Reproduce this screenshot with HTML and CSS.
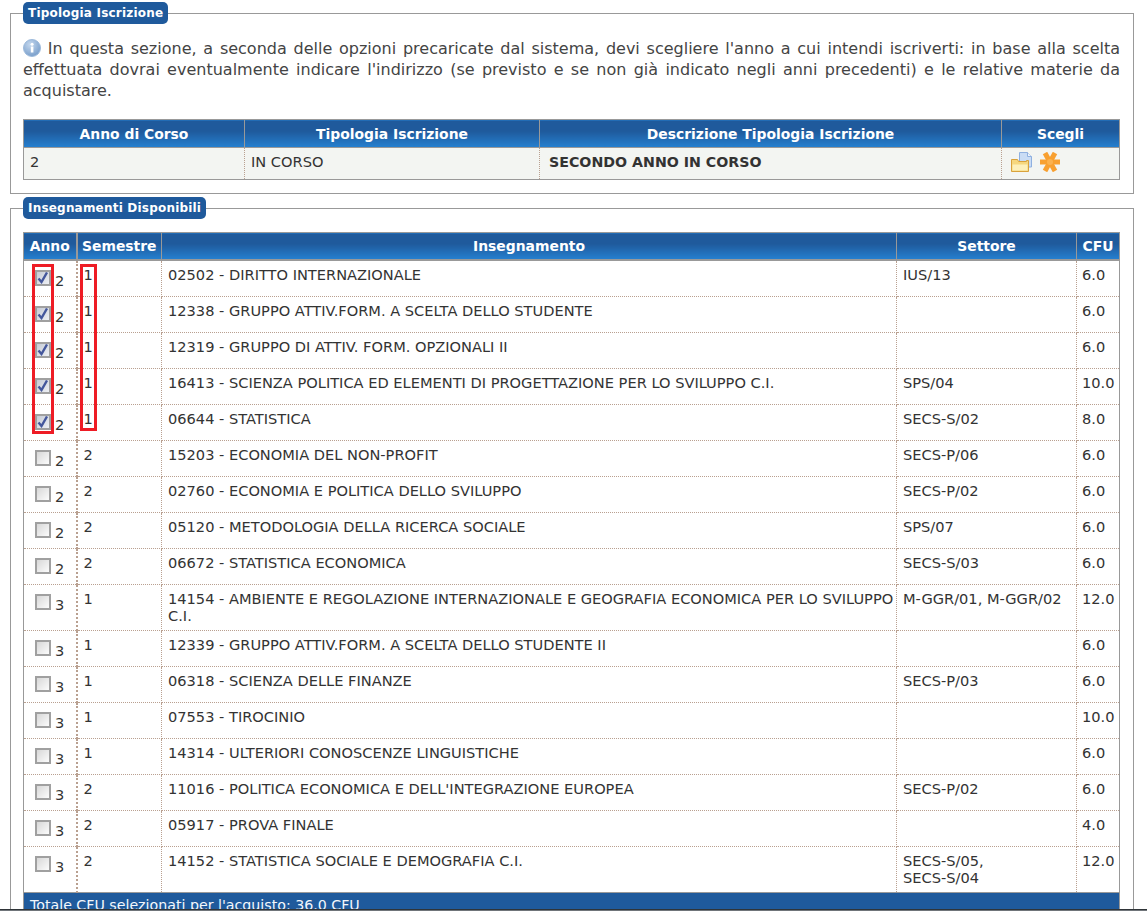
FILE: index.html
```html
<!DOCTYPE html>
<html lang="it">
<head>
  <meta charset="UTF-8" />
  <title>Scelta insegnamenti</title>
  <link rel="stylesheet" href="styles.css">
</head>
<body>
  <fieldset class="box box-top">
    <legend>Tipologia Iscrizione</legend>
    <p class="intro">
      <svg class="info" viewBox="0 0 18 18" width="18" height="18"><defs><radialGradient id="ig" cx="0.4" cy="0.3" r="0.8"><stop offset="0" stop-color="#c5d8ee"/><stop offset="1" stop-color="#6f97c6"/></radialGradient></defs><circle cx="9" cy="9" r="8.5" fill="url(#ig)" stroke="#9dbadb"/><rect x="7.800" y="7.500" width="2.600" height="6" fill="#fff"/><circle cx="9.100" cy="5.200" r="1.500" fill="#fff"/></svg>
      In questa sezione, a seconda delle opzioni precaricate dal sistema, devi scegliere l'anno a cui intendi iscriverti: in base alla scelta effettuata dovrai eventualmente indicare l'indirizzo (se previsto e se non già indicato negli anni precedenti) e le relative materie da acquistare.
    </p>
    <table class="grid grid-tipo">
      <colgroup><col class="c1"><col class="c2"><col class="c3"><col class="c4"></colgroup>
      <thead>
        <tr><th>Anno di Corso</th><th>Tipologia Iscrizione</th><th>Descrizione Tipologia Iscrizione</th><th>Scegli</th></tr>
      </thead>
      <tbody>
        <tr>
          <td>2</td>
          <td>IN CORSO</td>
          <td><strong>SECONDO ANNO IN CORSO</strong></td>
          <td class="actions">
            <svg viewBox="0 0 21 20" width="21" height="20"><path d="M8.500.5h8l4 4V15h-12z" fill="#c9dcf5" stroke="#8fb0e0"/><path d="M16.500.5v4h4" fill="#eef4fc" stroke="#8fb0e0"/><path d="M.5 19.500V7.500h6l1 2h8v-1h2v11z" fill="#f6d77e" stroke="#d9a23c"/><path d="M1.500 12.500h15v6h-15z" fill="#fdf0bb"/></svg>
            <svg viewBox="0 0 20 20" width="20" height="20"><g stroke="#f8a030" stroke-width="5" stroke-linecap="butt"><path d="M0 10h20"/><path d="M5 1l10 18"/><path d="M15 1L5 19"/></g><circle cx="10" cy="10" r="3" fill="#fbb14e"/></svg>
          </td>
        </tr>
      </tbody>
    </table>
  </fieldset>

  <fieldset class="box">
    <legend>Insegnamenti Disponibili</legend>
    <table class="grid grid-ins">
      <colgroup><col class="a"><col class="b"><col class="d"><col class="e"><col class="f"></colgroup>
      <thead>
        <tr><th>Anno</th><th>Semestre</th><th>Insegnamento</th><th>Settore</th><th>CFU</th></tr>
      </thead>
      <tbody>
        <tr><td class="anno"><span class="check on"><svg viewBox="0 0 12 12" width="12" height="12"><path d="M1.500 6.500l3 3.500 5.500-9.500" fill="none" stroke="#44579c" stroke-width="2.400"/></svg></span>2</td><td>1</td><td>02502 - DIRITTO INTERNAZIONALE</td><td>IUS/13</td><td>6.0</td></tr>
        <tr><td class="anno"><span class="check on"><svg viewBox="0 0 12 12" width="12" height="12"><path d="M1.500 6.500l3 3.500 5.500-9.500" fill="none" stroke="#44579c" stroke-width="2.400"/></svg></span>2</td><td>1</td><td>12338 - GRUPPO ATTIV.FORM. A SCELTA DELLO STUDENTE</td><td></td><td>6.0</td></tr>
        <tr><td class="anno"><span class="check on"><svg viewBox="0 0 12 12" width="12" height="12"><path d="M1.500 6.500l3 3.500 5.500-9.500" fill="none" stroke="#44579c" stroke-width="2.400"/></svg></span>2</td><td>1</td><td>12319 - GRUPPO DI ATTIV. FORM. OPZIONALI II</td><td></td><td>6.0</td></tr>
        <tr><td class="anno"><span class="check on"><svg viewBox="0 0 12 12" width="12" height="12"><path d="M1.500 6.500l3 3.500 5.500-9.500" fill="none" stroke="#44579c" stroke-width="2.400"/></svg></span>2</td><td>1</td><td>16413 - SCIENZA POLITICA ED ELEMENTI DI PROGETTAZIONE PER LO SVILUPPO C.I.</td><td>SPS/04</td><td>10.0</td></tr>
        <tr><td class="anno"><span class="check on"><svg viewBox="0 0 12 12" width="12" height="12"><path d="M1.500 6.500l3 3.500 5.500-9.500" fill="none" stroke="#44579c" stroke-width="2.400"/></svg></span>2</td><td>1</td><td>06644 - STATISTICA</td><td>SECS-S/02</td><td>8.0</td></tr>
        <tr><td class="anno"><span class="check"></span>2</td><td>2</td><td>15203 - ECONOMIA DEL NON-PROFIT</td><td>SECS-P/06</td><td>6.0</td></tr>
        <tr><td class="anno"><span class="check"></span>2</td><td>2</td><td>02760 - ECONOMIA E POLITICA DELLO SVILUPPO</td><td>SECS-P/02</td><td>6.0</td></tr>
        <tr><td class="anno"><span class="check"></span>2</td><td>2</td><td>05120 - METODOLOGIA DELLA RICERCA SOCIALE</td><td>SPS/07</td><td>6.0</td></tr>
        <tr><td class="anno"><span class="check"></span>2</td><td>2</td><td>06672 - STATISTICA ECONOMICA</td><td>SECS-S/03</td><td>6.0</td></tr>
        <tr><td class="anno"><span class="check"></span>3</td><td>1</td><td>14154 - AMBIENTE E REGOLAZIONE INTERNAZIONALE E GEOGRAFIA ECONOMICA PER LO SVILUPPO C.I.</td><td>M-GGR/01, M-GGR/02</td><td>12.0</td></tr>
        <tr><td class="anno"><span class="check"></span>3</td><td>1</td><td>12339 - GRUPPO ATTIV.FORM. A SCELTA DELLO STUDENTE II</td><td></td><td>6.0</td></tr>
        <tr><td class="anno"><span class="check"></span>3</td><td>1</td><td>06318 - SCIENZA DELLE FINANZE</td><td>SECS-P/03</td><td>6.0</td></tr>
        <tr><td class="anno"><span class="check"></span>3</td><td>1</td><td>07553 - TIROCINIO</td><td></td><td>10.0</td></tr>
        <tr><td class="anno"><span class="check"></span>3</td><td>1</td><td>14314 - ULTERIORI CONOSCENZE LINGUISTICHE</td><td></td><td>6.0</td></tr>
        <tr><td class="anno"><span class="check"></span>3</td><td>2</td><td>11016 - POLITICA ECONOMICA E DELL'INTEGRAZIONE EUROPEA</td><td>SECS-P/02</td><td>6.0</td></tr>
        <tr><td class="anno"><span class="check"></span>3</td><td>2</td><td>05917 - PROVA FINALE</td><td></td><td>4.0</td></tr>
        <tr><td class="anno"><span class="check"></span>3</td><td>2</td><td>14152 - STATISTICA SOCIALE E DEMOGRAFIA C.I.</td><td>SECS-S/05,<br>SECS-S/04</td><td>12.0</td></tr>
      </tbody>
      <tfoot>
        <tr><td colspan="5">Totale CFU selezionati per l'acquisto: 36.0 CFU</td></tr>
      </tfoot>
    </table>
  </fieldset>

  <!-- evidenziazioni rosse sopra la tabella -->
  <div class="mark mark-anno"></div>
  <div class="mark mark-sem"></div>
  <div class="window-edge"></div>
</body>
</html>
```

FILE: styles.css
```css
html, body {
  height: 911px;
  overflow: hidden;
}
body {
  margin: 0;
  padding: 2px 13px 0 10px;
  position: relative;
  background: #fff;
  color: #333;
  font-family: "DejaVu Sans", Verdana, sans-serif;
  font-size: 13px;
}
.box {
  margin: 0 0 3px;
  padding: 0 13px 13px 12px;
  border: 1px solid #999;
  min-width: 0;
}
legend {
  background: #1f5a9c;
  color: #fff;
  font-weight: bold;
  font-size: 12px;
  letter-spacing: 0.2px;
  line-height: 22px;
  padding: 0 5px;
  border-radius: 5px;
}
.intro {
  margin: 14px 0 18px;
  font-size: 16px;
  line-height: 21px;
  text-align: justify;
  color: #444;
}
.info {
  vertical-align: -3px;
}

.grid {
  width: 100%;
  border-collapse: collapse;
  table-layout: fixed;
  border: 1px solid #999;
}
.grid th {
  height: 27px;
  padding: 0;
  background: linear-gradient(#1f5a9c 0, #1f5a9c 40%, #2580d0 100%);
  color: #fff;
  font-size: 13.900px;
  font-weight: bold;
  text-align: center;
  border: 1px solid #999;
}
.grid td {
  padding: 5px 6px 6px;
  vertical-align: top;
  font-size: 14.600px;
  line-height: 17px;
  border: 1px dotted #b9a090;
}
.grid-tipo td {
  background: #f3f5f2;
  height: 20px;
}
.grid-tipo strong {
  margin-left: 3px;
  font-size: 14.200px;
}
.c1 { width: 221px; }
.c2 { width: 295px; }
.c3 { width: 462px; }
.grid-tipo .actions {
  padding: 4px 0 0 9px;
}
.actions svg {
  vertical-align: top;
  margin-right: 3px;
}

.a { width: 53px; }
.b { width: 85px; }
.e { width: 180px; }
.f { width: 43px; }
.grid-ins {
  margin-top: 13px;
}
.grid-ins th {
  height: 26px;
  border-bottom-width: 2px;
}
.grid-ins th:first-child {
  border-right-width: 2px;
}
.grid-ins tbody td {
  height: 24px;
}
.grid-ins tbody td:first-child {
  border-right-width: 2px;
}
.grid-ins tbody td:nth-child(3) {
  padding-right: 2px;
}
.grid-ins tbody td:last-child {
  padding-left: 5px;
  padding-right: 0;
}
.grid-ins tbody .anno {
  padding: 7px 0 0;
  line-height: 26px;
  white-space: nowrap;
}
.check {
  display: inline-block;
  box-sizing: border-box;
  width: 16px;
  height: 16px;
  margin: 2px 4px 0 11px;
  vertical-align: top;
  border: 2px solid #a0a0a0;
  background: linear-gradient(135deg, #d8d8d8, #fcfcfc);
}
.check.on {
  background: linear-gradient(135deg, #c6cbd6, #eef0f4);
}
.check svg {
  display: block;
}
.grid tfoot td {
  padding: 4px 6px;
  background: #1f5a9c;
  color: #f4f7fb;
  font-size: 14.200px;
  border: 1px solid #999;
}

.mark {
  position: absolute;
  border: 3px solid #ee1c25;
  box-sizing: border-box;
}
.mark-anno {
  left: 32px;
  top: 264px;
  width: 22px;
  height: 170px;
}
.mark-sem {
  left: 80px;
  top: 264px;
  width: 17px;
  height: 167px;
}
.window-edge {
  position: absolute;
  left: 0;
  right: 0;
  top: 909px;
  height: 2px;
  background: linear-gradient(#2f3438 50%, #70757a 50%);
}
```
